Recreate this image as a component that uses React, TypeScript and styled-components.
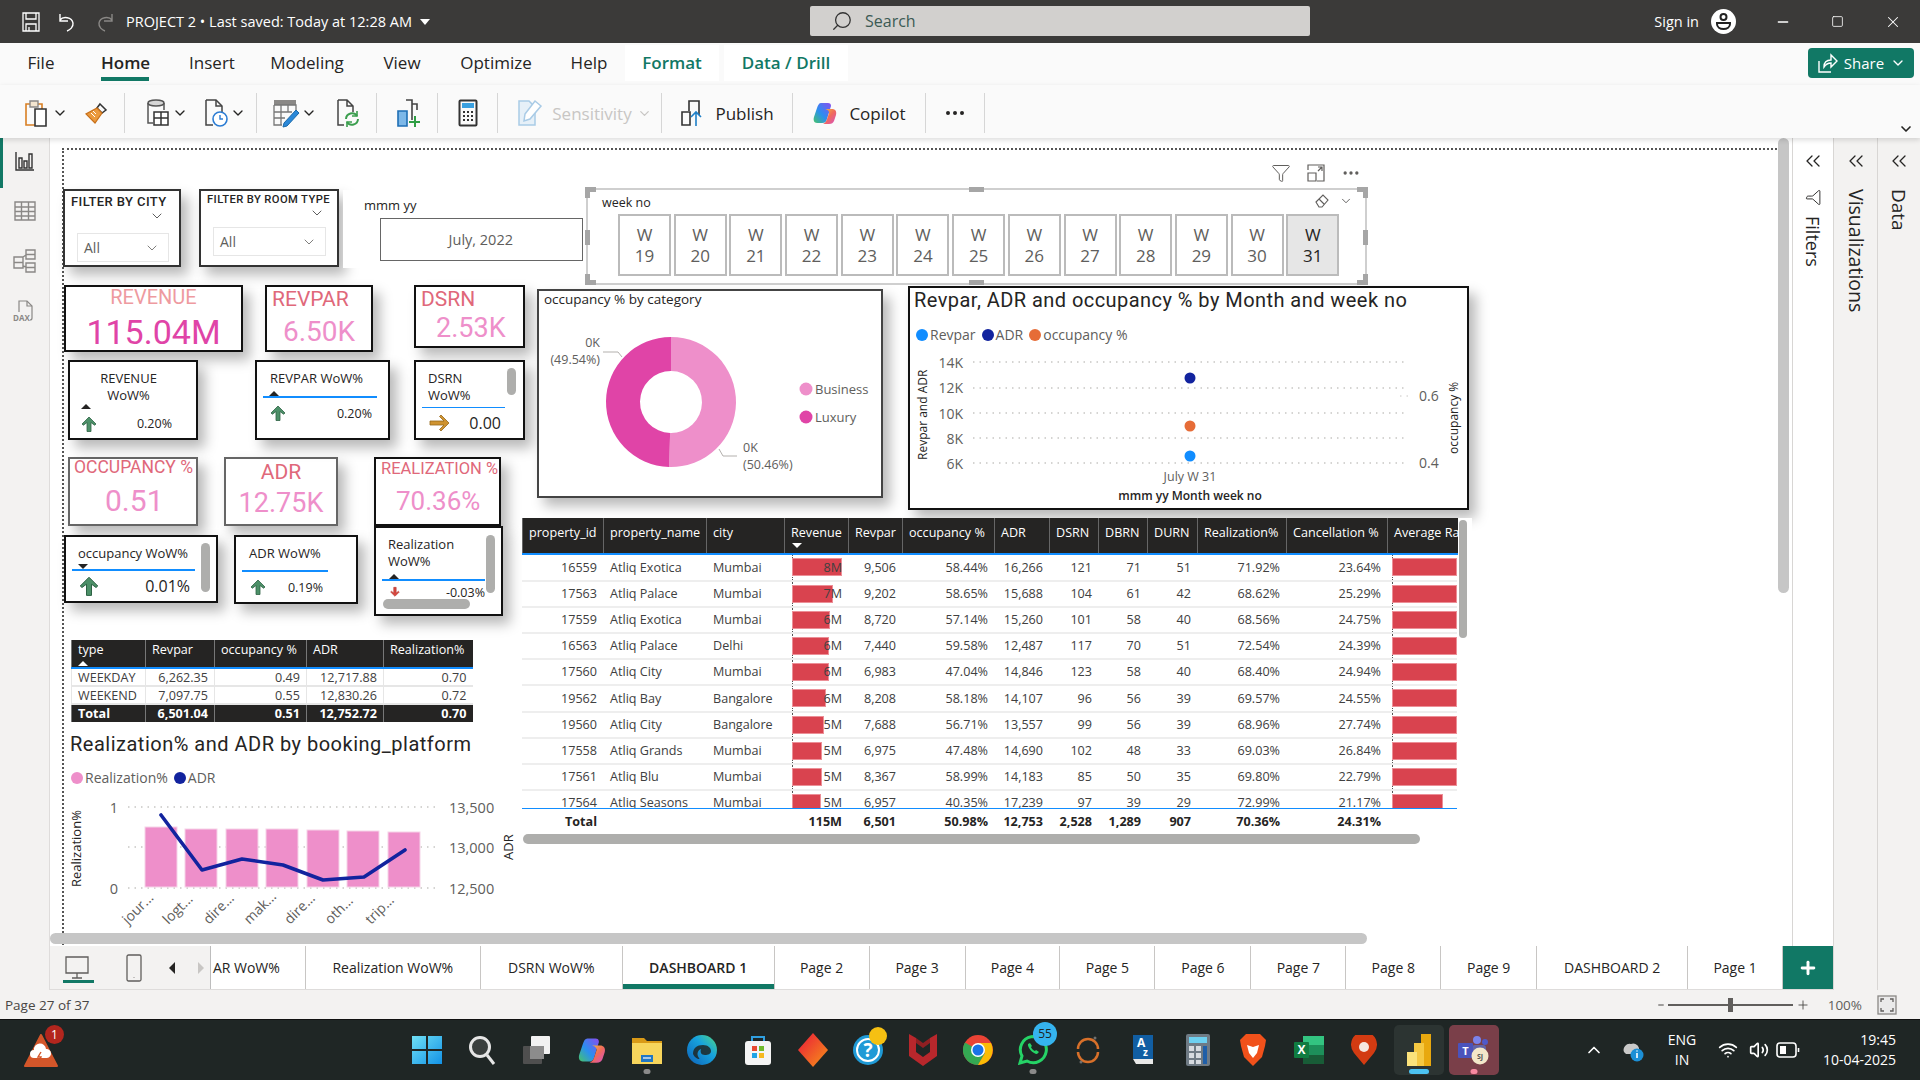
import React from 'react';
import styled, { createGlobalStyle } from 'styled-components';
import {
  ChevronDown,
  ChevronUp,
  ChevronsLeft,
  Funnel,
  Minus,
  Search,
  Square,
  Volume2,
  Wifi,
  X,
  Plus,
  MoreHorizontal,
} from 'lucide-react';

const UI = '"Open Sans", "Noto Sans", sans-serif';
const DIN = 'Roboto, "Liberation Sans", sans-serif';
const TEAL = '#117865';
const PINK = '#ee8fca';
const MAGENTA = '#e044a7';
const SALMON = '#e0687a';
const NAVY = '#12239e';

// report page origin in window pixels (inside of the dotted border)
const OX = 64;
const OY = 150;

const GlobalStyle = createGlobalStyle`
  html, body { margin: 0; padding: 0; background: #fff; }
  body { font-family: ${UI}; color: #252423; overflow: hidden; }
  * { box-sizing: border-box; }
`;

const Shell = styled.div`
  width: 1920px;
  height: 1080px;
  display: flex;
  flex-direction: column;
  overflow: hidden;
`;

/* title bar */
const TitleBar = styled.header`
  height: 43px;
  background: #3b3a39;
  color: #fff;
  display: flex;
  align-items: center;
  position: relative;
  padding-left: 20px;
`;
const TitleButton = styled.span<{ $w: number }>`
  width: ${(p) => p.$w}px;
  display: flex;
  align-items: center;
  justify-content: center;
`;
const DocName = styled.span`
  font-size: 14.5px;
  margin-left: 8px;
  white-space: nowrap;
`;
const Caret = styled.span`
  width: 0;
  height: 0;
  margin-left: 8px;
  border-left: 5px solid transparent;
  border-right: 5px solid transparent;
  border-top: 6px solid #fff;
`;
const SearchBox = styled.div`
  position: absolute;
  left: 810px;
  top: 6px;
  width: 500px;
  height: 30px;
  background: #d2d0ce;
  border-radius: 2px;
  display: flex;
  align-items: center;
  padding-left: 21px;
  gap: 12px;
  color: #3c5a54;
  font-size: 16px;
`;
const MirroredSearch = styled(Search)`
  transform: scaleX(-1);
`;
const TitleRight = styled.div`
  margin-left: auto;
  display: flex;
  align-items: center;
`;
const SignIn = styled.span`
  font-size: 14.5px;
  margin-right: 12px;
`;
const Avatar = styled.span`
  width: 25px;
  height: 25px;
  border-radius: 50%;
  background: #fff;
  margin-right: 19px;
  display: flex;
  align-items: center;
  justify-content: center;
`;
const WinButton = styled.span`
  width: 55px;
  display: flex;
  justify-content: center;
`;

/* menu + ribbon */
const MenuBar = styled.nav`
  height: 42px;
  background: #fafafa;
  display: flex;
  align-items: flex-start;
  padding: 2px 0 0 0;
  position: relative;
  font-size: 17px;
`;
const MenuItem = styled.span<{ $left: number; $w: number; $active?: boolean; $context?: boolean }>`
  margin-left: ${(p) => p.$left}px;
  width: ${(p) => p.$w}px;
  height: 36px;
  line-height: 35px;
  text-align: center;
  white-space: nowrap;
  color: ${(p) => (p.$context ? TEAL : '#252423')};
  font-weight: ${(p) => (p.$context ? 600 : p.$active ? 600 : 400)};
  background: ${(p) => (p.$context ? '#fff' : 'transparent')};
  border-bottom: ${(p) => (p.$active ? `4px solid ${TEAL}` : 'none')};
`;
const ShareButton = styled.button`
  position: absolute;
  left: 1808px;
  top: 5px;
  width: 106px;
  height: 30px;
  background: ${TEAL};
  color: #fff;
  border: 0;
  border-radius: 4px;
  display: flex;
  align-items: center;
  justify-content: center;
  gap: 6px;
  font: 400 15px ${UI};
`;
const Ribbon = styled.div`
  height: 53px;
  background: #fafafa;
  box-shadow: 0 2px 5px rgba(0, 0, 0, 0.14);
  display: flex;
  align-items: flex-start;
  padding: 8px 0 0 16px;
  position: relative;
  z-index: 5;
`;
const RibbonGroup = styled.div<{ $w: number; $muted?: boolean; $gap?: number; $shift?: number }>`
  width: ${(p) => p.$w}px;
  height: 40px;
  display: flex;
  align-items: center;
  justify-content: center;
  gap: ${(p) => p.$gap ?? 9}px;
  border-right: 1px solid #d6d6d6;
  padding-left: ${(p) => Math.max(p.$shift ?? 0, 0)}px;
  padding-right: ${(p) => Math.max(-(p.$shift ?? 0), 0)}px;
  font-size: 17px;
  color: ${(p) => (p.$muted ? '#c8c6c4' : '#252423')};
`;
const RibbonCaret = styled(ChevronDown)<{ $pull: number }>`
  margin-left: -${(p) => p.$pull}px;
`;
const RibbonFold = styled.span`
  position: absolute;
  right: 6px;
  bottom: 1px;
  display: flex;
`;

/* body */
const Body = styled.main`
  height: 852px;
  display: flex;
`;
const NavRail = styled.aside`
  width: 50px;
  background: #f3f2f1;
  border-right: 1px solid #dedcdb;
  display: flex;
  flex-direction: column;
  align-items: center;
  padding-top: 6px;
  gap: 16px;
  position: relative;
`;
const NavMarker = styled.span`
  position: absolute;
  left: 0;
  top: 0;
  width: 3px;
  height: 50px;
  background: ${TEAL};
`;
const NavIcon = styled.span`
  width: 34px;
  height: 34px;
  display: flex;
  align-items: center;
  justify-content: center;
`;
const Center = styled.div`
  width: 1783px;
  display: flex;
  flex-direction: column;
`;
const CanvasRow = styled.div`
  flex: 1;
  display: flex;
  position: relative;
  min-height: 0;
`;
const CanvasArea = styled.section`
  flex: 1;
  position: relative;
  background: #fff;
  padding: 10px 11px 0 12px;
  overflow: hidden;
`;
const ReportPage = styled.div`
  position: relative;
  height: 900px;
  border-top: 2px dotted #555;
  border-left: 2px dotted #555;
`;
const ScrollThumbV = styled.span`
  position: absolute;
  right: 3px;
  top: 0;
  width: 11px;
  height: 455px;
  background: #c6c6c6;
  border-radius: 6px;
`;
const ScrollThumbH = styled.span`
  position: absolute;
  left: 0;
  bottom: 2px;
  width: 1317px;
  height: 11px;
  background: #c6c6c6;
  border-radius: 6px;
`;
const SidePane = styled.aside<{ $w: number; $bg: string }>`
  width: ${(p) => p.$w}px;
  background: ${(p) => p.$bg};
  border-left: 1px solid #d8d6d4;
  display: flex;
  flex-direction: column;
  align-items: center;
  padding-top: 11px;
  gap: 16px;
  position: relative;
`;
const PaneLabel = styled.span<{ $size: number; $pull?: number }>`
  writing-mode: vertical-rl;
  font-size: ${(p) => p.$size}px;
  line-height: 20px;
  margin-top: ${(p) => p.$pull ?? 0}px;
  color: #252423;
`;
const PaneFunnel = styled(Funnel)`
  transform: rotate(90deg);
`;

/* free canvas visuals */
const Visual = styled.div<{ $x: number; $y: number; $w: number; $h: number; $z?: number; $shadow?: boolean }>`
  position: absolute;
  left: ${(p) => p.$x - OX}px;
  top: ${(p) => p.$y - OY}px;
  width: ${(p) => p.$w}px;
  height: ${(p) => p.$h}px;
  background: #fff;
  z-index: ${(p) => p.$z ?? 1};
  box-shadow: ${(p) => (p.$shadow === false ? 'none' : '7px 8px 12px rgba(0, 0, 0, 0.28)')};
`;
const Framed = styled(Visual)<{ $line?: string }>`
  border: 2px solid ${(p) => p.$line ?? '#111'};
  display: flex;
  flex-direction: column;
`;
const KpiTitle = styled.div<{ $size: number; $color: string; $top: number; $left?: number }>`
  font: 400 ${(p) => p.$size}px/1 ${DIN};
  color: ${(p) => p.$color};
  margin-top: ${(p) => p.$top}px;
  white-space: nowrap;
  text-align: ${(p) => (p.$left === undefined ? 'center' : 'left')};
  margin-left: ${(p) => p.$left ?? 0}px;
`;
const KpiValue = styled(KpiTitle)``;

const SlicerTitle = styled.div<{ $size: number; $left: number; $top: number }>`
  font: 500 ${(p) => p.$size}px/1 ${DIN};
  letter-spacing: 0.4px;
  color: #252423;
  margin: ${(p) => p.$top}px 0 0 ${(p) => p.$left}px;
  white-space: nowrap;
`;
const SlicerChevron = styled.span<{ $right: number }>`
  align-self: flex-end;
  display: flex;
  margin: 0 ${(p) => p.$right}px 0 0;
`;
const DropBox = styled.div<{ $left: number; $w: number; $top: number }>`
  width: ${(p) => p.$w}px;
  height: 29px;
  margin: ${(p) => p.$top}px 0 0 ${(p) => p.$left}px;
  border: 1px solid #e6e6e6;
  display: flex;
  align-items: center;
  justify-content: space-between;
  padding: 0 8px 0 6px;
  font-size: 14px;
  color: #605e5c;
`;
const DateLabel = styled.div`
  font-size: 13px;
  color: #252423;
  margin: 6px 0 0 21px;
`;
const DateBox = styled.div`
  width: 203px;
  height: 43px;
  border: 1px solid #666;
  margin: 4px 0 0 37px;
  display: flex;
  align-items: center;
  justify-content: flex-end;
  padding-right: 69px;
  font-size: 14.5px;
  color: #605e5c;
`;

const WeekFrame = styled(Visual)`
  border: 2px solid #cfcfcf;
  padding: 3px 0 0 30px;
`;
const WeekTitle = styled.div`
  font-size: 12.5px;
  margin-left: -16px;
  height: 21px;
  line-height: 19px;
`;
const WeekRow = styled.div`
  display: flex;
  gap: 2.7px;
`;
const WeekButton = styled.div<{ $on?: boolean }>`
  width: 53px;
  height: 62px;
  border: 2px solid #bbb;
  background: ${(p) => (p.$on ? '#e6e6e6' : '#fff')};
  color: ${(p) => (p.$on ? '#252423' : '#605e5c')};
  font-size: 17px;
  line-height: 21px;
  display: flex;
  flex-direction: column;
  align-items: center;
  justify-content: center;
`;
const Handle = styled.span<{ $l: number; $t: number; $w: number; $h: number }>`
  position: absolute;
  left: ${(p) => p.$l}px;
  top: ${(p) => p.$t}px;
  width: ${(p) => p.$w}px;
  height: ${(p) => p.$h}px;
  background: #a6a6a6;
`;
const HeaderTools = styled.div`
  position: absolute;
  left: ${1271 - OX}px;
  top: ${163 - OY}px;
  width: 90px;
  display: flex;
  align-items: center;
  justify-content: space-between;
  color: #605e5c;
`;
const WeekTools = styled.div`
  position: absolute;
  right: 12px;
  top: 4px;
  display: flex;
  align-items: center;
  gap: 10px;
`;

const WowTitle = styled.div<{ $left: number; $center?: boolean }>`
  font-size: 13px;
  line-height: 17px;
  margin: 7.5px 0 0 ${(p) => p.$left}px;
  padding-right: ${(p) => (p.$center ? 9 : 0)}px;
  white-space: nowrap;
  text-align: ${(p) => (p.$center ? 'center' : 'left')};
  color: #252423;
`;
const SortSlot = styled.div<{ $left: number }>`
  height: 9.5px;
  padding-left: ${(p) => p.$left}px;
  display: flex;
  align-items: flex-end;
`;
const SortMark = styled.span<{ $down?: boolean; $light?: boolean }>`
  display: block;
  width: 0;
  height: 0;
  border-left: 5px solid transparent;
  border-right: 5px solid transparent;
  ${(p) => (p.$down ? 'border-top' : 'border-bottom')}: 5px solid ${(p) => (p.$light ? '#fff' : '#252423')};
`;
const HeadSort = styled.span<{ $left: number; $bottom: number }>`
  position: absolute;
  left: ${(p) => p.$left}px;
  bottom: ${(p) => p.$bottom}px;
`;
const WowRule = styled.div<{ $left: number; $w: number }>`
  width: ${(p) => p.$w}px;
  height: 2px;
  margin-left: ${(p) => p.$left}px;
  background: #118dff;
`;
const WowRow = styled.div<{ $left: number; $right: number; $size: number; $h?: number }>`
  height: ${(p) => p.$h ?? 30}px;
  flex-shrink: 0;
  margin-left: ${(p) => p.$left}px;
  width: ${(p) => p.$right - p.$left}px;
  display: flex;
  align-items: center;
  font-size: ${(p) => p.$size}px;
  color: #252423;
  white-space: nowrap;
  overflow: hidden;
`;
const WowValue = styled.span<{ $left?: number }>`
  margin-left: ${(p) => (p.$left === undefined ? 'auto' : `${p.$left}px`)};
  flex-shrink: 0;
`;
const InnerThumb = styled.span<{ $l: number; $t: number; $w: number; $h: number }>`
  position: absolute;
  left: ${(p) => p.$l}px;
  top: ${(p) => p.$t}px;
  width: ${(p) => p.$w}px;
  height: ${(p) => p.$h}px;
  background: #aeaeac;
  border-radius: 5px;
`;

/* tables */
const Col = styled.col<{ $w: number }>`
  width: ${(p) => p.$w}px;
`;
const SmallTable = styled.table`
  width: 401px;
  table-layout: fixed;
  border-collapse: collapse;
  font-size: 12.6px;
  th {
    height: 28px;
    position: relative;
    background: #252423;
    color: #fff;
    font-weight: 400;
    text-align: left;
    vertical-align: top;
    padding: 2px 6px 0;
    border-left: 1px solid #777;
    border-bottom: 2px solid #118dff;
    line-height: 16px;
  }
  td {
    height: 18px;
    padding: 0 6px;
    text-align: right;
    color: #404040;
    border-left: 1px solid #e6e6e6;
    border-bottom: 2px solid #e6e6e6;
    line-height: 15px;
  }
  td:first-child { text-align: left; }
  tr.total td {
    background: #252423;
    color: #fff;
    font-weight: 700;
    border-left: 1px solid #777;
    border-top: 2px solid #118dff;
    border-bottom: 0;
  }
`;
const BigTable = styled.table`
  width: 935px;
  table-layout: fixed;
  border-collapse: collapse;
  font-size: 12.6px;
  th {
    height: 36px;
    position: relative;
    background: #252423;
    color: #fff;
    font-weight: 400;
    text-align: left;
    vertical-align: top;
    padding: 7px 6px 0;
    border-left: 1px solid #666;
    border-bottom: 2px solid #118dff;
    line-height: 16px;
    white-space: nowrap;
    overflow: hidden;
  }
  td {
    height: 26.1px;
    padding: 0 6px;
    text-align: right;
    color: #404040;
    border-bottom: 2px solid #eee;
    line-height: 16px;
    white-space: nowrap;
  }
  td.text { text-align: left; padding-left: 7px; }
`;
const RowClip = styled.div`
  width: 935px;
  height: 254px;
  overflow: hidden;
  border-bottom: 1.5px solid #118dff;
`;
const TotalRow = styled(BigTable)`
  td {
    height: 26px;
    border: 0;
    font-weight: 700;
    color: #252423;
  }
`;
const BarCell = styled.td<{ $inset: number }>`
  position: relative;
  &::before {
    content: '';
    position: absolute;
    left: ${(p) => p.$inset}px;
    top: 0;
    bottom: 0;
    border-left: 1px dotted #555;
  }
`;
const DataBar = styled.span<{ $left: number }>`
  position: absolute;
  left: ${(p) => p.$left}px;
  top: 3px;
  height: 18px;
  background: #d9434f;
  border: 1px solid #ec8f97;
  z-index: 0;
`;
const BarLabel = styled.span`
  position: relative;
  z-index: 1;
`;

/* charts */
const VisualTitle = styled.div<{ $size: number; $font?: string; $left: number; $top: number; $spacing?: number; $weight?: number }>`
  font: ${(p) => p.$weight ?? 400} ${(p) => p.$size}px/1.2 ${(p) => p.$font ?? UI};
  letter-spacing: ${(p) => p.$spacing ?? 0}px;
  margin: ${(p) => p.$top}px 0 0 ${(p) => p.$left}px;
  color: #252423;
  white-space: nowrap;
`;
const Legend = styled.div<{ $left: number; $top: number; $gap: number }>`
  display: flex;
  align-items: center;
  gap: ${(p) => p.$gap}px;
  margin: ${(p) => p.$top}px 0 0 ${(p) => p.$left}px;
  font-size: 14px;
  color: #605e5c;
`;
const LegendEntry = styled.span`
  display: flex;
  align-items: center;
  gap: 2px;
`;
const Dot = styled.span<{ $c: string }>`
  width: 12px;
  height: 12px;
  border-radius: 50%;
  background: ${(p) => p.$c};
`;
const ChartCanvas = styled.svg`
  position: absolute;
  left: 0;
  top: 0;
  overflow: visible;
  pointer-events: none;
`;
const ChartText = styled.text<{ $size?: number; $fill?: string; $weight?: number }>`
  font-family: ${UI};
  font-size: ${(p) => p.$size ?? 14}px;
  font-weight: ${(p) => p.$weight ?? 400};
  fill: ${(p) => p.$fill ?? '#605e5c'};
`;

/* page tabs */
const TabStrip = styled.div`
  height: 44px;
  display: flex;
  background: #fff;
  position: relative;
  z-index: 3;
  border-bottom: 1px solid #dedcdb;
`;
const ViewTools = styled.div`
  width: 161px;
  background: #f3f2f1;
  display: flex;
  align-items: center;
  padding-left: 15px;
  position: relative;
  border-right: 1px solid #bdbdbd;
`;
const ViewMarker = styled.span`
  position: absolute;
  left: 13px;
  bottom: 6px;
  width: 31px;
  height: 3px;
  background: ${TEAL};
`;
const ViewButton = styled.span<{ $w: number }>`
  width: ${(p) => p.$w}px;
  display: flex;
  align-items: center;
`;
const Tab = styled.div<{ $w: number; $active?: boolean; $cut?: boolean }>`
  width: ${(p) => p.$w}px;
  height: 100%;
  border-right: 1px solid #c8c6c4;
  font-size: 14px;
  font-weight: ${(p) => (p.$active ? 600 : 400)};
  color: #252423;
  display: flex;
  align-items: center;
  justify-content: ${(p) => (p.$cut ? 'flex-end' : 'center')};
  padding-right: ${(p) => (p.$cut ? 25 : 0)}px;
  box-shadow: ${(p) => (p.$active ? `inset 0 -5px 0 ${TEAL}` : 'none')};
  white-space: nowrap;
  overflow: hidden;
`;
const AddTab = styled.div`
  width: 50px;
  height: 100%;
  background: ${TEAL};
  color: #fff;
  display: flex;
  align-items: center;
  justify-content: center;
`;

/* status + task bar */
const StatusBar = styled.footer`
  height: 29px;
  background: #f3f2f1;
  display: flex;
  align-items: center;
  padding-left: 5px;
  font-size: 13.5px;
  color: #484644;
`;
const ZoomControl = styled.div`
  margin-left: auto;
  display: flex;
  align-items: center;
  gap: 3px;
  padding-right: 23px;
`;
const ZoomTrack = styled.span`
  width: 125px;
  height: 2px;
  background: #605e5c;
  position: relative;
`;
const ZoomThumb = styled.span`
  position: absolute;
  left: 60px;
  top: -6px;
  width: 5px;
  height: 14px;
  background: #605e5c;
`;
const ZoomText = styled.span`
  margin: 0 12px 0 15px;
  color: #605e5c;
`;
const Taskbar = styled.div`
  height: 61px;
  background: #1f2625;
  border-top: 1px solid #111;
  display: flex;
  align-items: center;
  color: #fff;
`;
const TaskStart = styled.div`
  width: 402px;
  padding-left: 16px;
  display: flex;
`;
const TaskIcons = styled.div`
  display: flex;
  align-items: center;
`;
const TaskTile = styled.div<{ $bg?: string }>`
  width: 50px;
  height: 50px;
  margin-right: 5.1px;
  position: relative;
  display: flex;
  align-items: center;
  justify-content: center;
  border-radius: 5px;
  background: ${(p) => p.$bg ?? 'transparent'};
`;
const TileDot = styled.span<{ $c: string; $w: number }>`
  position: absolute;
  left: 50%;
  bottom: 1px;
  width: ${(p) => p.$w}px;
  height: 5px;
  border-radius: 3px;
  transform: translateX(-50%);
  background: ${(p) => p.$c};
`;
const TileBadge = styled.span<{ $c: string; $color?: string; $r: number; $t: number; $size: number }>`
  position: absolute;
  right: ${(p) => p.$r}px;
  top: ${(p) => p.$t}px;
  width: ${(p) => p.$size}px;
  height: ${(p) => p.$size}px;
  border-radius: 50%;
  background: ${(p) => p.$c};
  color: ${(p) => p.$color ?? '#fff'};
  font-size: 12px;
  line-height: ${(p) => p.$size}px;
  text-align: center;
`;
const Tray = styled.div`
  margin-left: auto;
  display: flex;
  align-items: center;
  padding-right: 24px;
`;
const TrayIcon = styled.span<{ $w: number }>`
  width: ${(p) => p.$w}px;
  display: flex;
  justify-content: center;
`;
const TrayText = styled.div<{ $right?: boolean; $w: number }>`
  width: ${(p) => p.$w}px;
  font-size: 14px;
  line-height: 20px;
  text-align: ${(p) => (p.$right ? 'right' : 'center')};
  white-space: nowrap;
`;

/* ----- icons ----- */
type IconProps = { size?: number };

const SaveIcon = () => (
  <svg width="20" height="22" viewBox="0 0 20 22" fill="none" stroke="#fff" strokeWidth="1.3">
    <path d="M2 2h16v18H2zM5 2v6h10V2M5 20v-7h10v7M8 20v-4" />
  </svg>
);
const UndoIcon = () => (
  <svg width="20" height="22" viewBox="0 0 20 22" fill="none" stroke="#fff" strokeWidth="1.4">
    <path d="M3 3v7h8M3 9c3-4 12-3 13 3 .5 4-3 7-6 8" />
  </svg>
);
const RedoIcon = () => (
  <svg width="20" height="22" viewBox="0 0 20 22" fill="none" stroke="#8a8886" strokeWidth="1.4">
    <path d="M17 3v7H9M17 9c-3-4-12-3-13 3-.5 4 3 7 6 8" />
  </svg>
);
const PersonIcon = () => (
  <svg width="19" height="21" viewBox="0 0 19 21" fill="none" stroke="#222" strokeWidth="2">
    <circle cx="9.5" cy="6" r="3" />
    <path d="M3 12h13v1c0 3-3 5-6.5 5S3 16 3 13z" />
  </svg>
);
const ShareIcon = () => (
  <svg width="22" height="22" viewBox="0 0 22 22" fill="none" stroke="#fff" strokeWidth="1.4">
    <path d="M3 9v11h12M3 20l0 0" />
    <path d="M8 15c0-5 3-7 7-7V3l6 6-6 6v-4c-3 0-5 1-7 4z" />
  </svg>
);
const ClipboardIcon = () => (
  <svg width="26" height="30" viewBox="0 0 26 30" fill="none">
    <path d="M2 6h16v21H2z" stroke="#d97f23" strokeWidth="1.6" />
    <path d="M6 3h8v6H6z" stroke="#8a8886" strokeWidth="1.4" fill="#f3e5d0" />
    <path d="M11 11h11v17H11z" stroke="#333" strokeWidth="1.6" fill="#fff" />
  </svg>
);
const PainterIcon = () => (
  <svg width="26" height="26" viewBox="0 0 26 26">
    <path d="M16 4l6 6-4 3-5-5z" fill="none" stroke="#333" strokeWidth="1.5" />
    <path d="M13 8l5 5-7 10L2 14z" fill="#eb9a3e" stroke="#c8701a" strokeWidth="1.2" />
    <path d="M7 13l4 4M9 11l3 3" stroke="#fff" strokeWidth="1" />
  </svg>
);
const GetDataIcon = () => (
  <svg width="26" height="30" viewBox="0 0 26 30" fill="none" stroke="#555" strokeWidth="1.5">
    <ellipse cx="11" cy="5" rx="8" ry="3" fill="#d6d6d6" />
    <path d="M3 5v20h5M19 5v7" />
    <path d="M9 14h14v13H9zM9 20h14M16 14v13" stroke="#333" fill="#fff" />
  </svg>
);
const RecentIcon = () => (
  <svg width="26" height="30" viewBox="0 0 26 30" fill="none">
    <path d="M3 2h10l6 6v11M3 2v25h7" stroke="#444" strokeWidth="1.5" />
    <path d="M13 2v6h6" stroke="#444" strokeWidth="1.5" />
    <circle cx="17" cy="21" r="7" stroke="#2b7cd3" strokeWidth="1.6" fill="#fff" />
    <path d="M17 17v4h3" stroke="#2b7cd3" strokeWidth="1.4" />
  </svg>
);
const TransformIcon = () => (
  <svg width="28" height="30" viewBox="0 0 28 30" fill="none">
    <path d="M2 2h22v5H2z" fill="#8a8886" />
    <path d="M2 7h22v7M2 7v20h8M2 14h18M2 20h11M9 7v20M16 7v7" stroke="#777" strokeWidth="1.3" />
    <path d="M12 25l12-13 3 3-12 13-4 1z" fill="#2b88d8" stroke="#1a6aa9" strokeWidth="1" />
  </svg>
);
const RefreshIcon = () => (
  <svg width="26" height="30" viewBox="0 0 26 30" fill="none">
    <path d="M3 2h9l6 6v6M3 2v25h6M12 2v6h6" stroke="#444" strokeWidth="1.5" />
    <path d="M11 21a6 6 0 0 1 11-3M23 21a6 6 0 0 1-11 3" stroke="#3b9e4e" strokeWidth="2" />
    <path d="M22 13v5h-5M12 29v-5h5" stroke="#3b9e4e" strokeWidth="1.6" />
  </svg>
);
const NewVisualIcon = () => (
  <svg width="26" height="30" viewBox="0 0 26 30" fill="none">
    <path d="M2 13h9v15H2z" fill="#7db8e8" stroke="#1f6fb5" strokeWidth="1.6" />
    <path d="M10 2h6v20M16 6h5v6" stroke="#444" strokeWidth="1.6" />
    <path d="M19 18v11M13 24h11" stroke="#2f9e44" strokeWidth="2" />
  </svg>
);
const CalcIcon = () => (
  <svg width="20" height="28" viewBox="0 0 20 28" fill="none">
    <rect x="1.5" y="1.5" width="17" height="25" rx="1" stroke="#333" strokeWidth="2" />
    <rect x="4" y="4" width="12" height="5" fill="#3aa0e0" />
    <path d="M5 13h2M9 13h2M13 13h2M5 17h2M9 17h2M13 17h2M5 21h2M9 21h2M13 21h2" stroke="#333" strokeWidth="2" />
  </svg>
);
const SensitivityIcon = () => (
  <svg width="26" height="30" viewBox="0 0 26 30" fill="none" stroke="#a9cbe6" strokeWidth="1.5">
    <path d="M2 3h10l6 6v18H2z" fill="#e6f0f8" />
    <path d="M8 16L18 3l6 5-11 13-6 2z" fill="#fff" />
  </svg>
);
const PublishIcon = () => (
  <svg width="24" height="30" viewBox="0 0 24 30" fill="none" stroke="#333" strokeWidth="1.6">
    <path d="M9 13V3h10v14" />
    <path d="M2 14h8v13H2z" />
    <path d="M16 28V14M11 19l5-5 5 5" stroke="#1f7fc7" />
  </svg>
);
const CopilotIcon = ({ size = 26 }: IconProps) => (
  <svg width={size} height={size} viewBox="0 0 26 26">
    <defs>
      <linearGradient id="cpA" x1="0" y1="1" x2="1" y2="0">
        <stop offset="0" stopColor="#46c46a" />
        <stop offset="0.45" stopColor="#2a8ff0" />
        <stop offset="1" stopColor="#8a4df0" />
      </linearGradient>
      <linearGradient id="cpB" x1="0" y1="0" x2="1" y2="1">
        <stop offset="0" stopColor="#f2c33a" />
        <stop offset="0.5" stopColor="#f06a5a" />
        <stop offset="1" stopColor="#d64fc8" />
      </linearGradient>
    </defs>
    <path d="M9 3h7c2 0 3 1 3 3l-4 13c-1 3-2 4-5 4H5c-3 0-4-3-3-6l3-9c1-3 2-5 4-5z" fill="url(#cpA)" />
    <path d="M12 9h8c3 0 5 2 4 6l-2 6c-1 2-2 3-5 3h-6c2-1 3-2 4-5l2-6c.5-2-2-4-5-4z" fill="url(#cpB)" />
  </svg>
);
const ReportNavIcon = () => (
  <svg width="20" height="20" viewBox="0 0 20 20" fill="none" stroke="#333" strokeWidth="1.4">
    <path d="M1 1v18h18" />
    <path d="M4 7h3v10H4zM9 10h3v7H9zM14 3h3v14h-3z" />
  </svg>
);
const TableNavIcon = () => (
  <svg width="22" height="20" viewBox="0 0 22 20" fill="none" stroke="#8a8886" strokeWidth="1.4">
    <path d="M1 1h20v18H1zM1 6h20M1 10.500h20M1 15h20M7.500 1v18M14.500 1v18" />
  </svg>
);
const ModelNavIcon = () => (
  <svg width="23" height="24" viewBox="0 0 23 24" fill="none" stroke="#8a8886" strokeWidth="1.4">
    <path d="M1 8h9v11H1zM1 13.500h9M13 1h9v9h-9zM13 5.500h9M13 14h9v9h-9zM13 18.500h9M10 8l3-2M10 17l3 1" />
  </svg>
);
const DaxNavIcon = () => (
  <svg width="24" height="24" viewBox="0 0 24 24" fill="none" stroke="#8a8886" strokeWidth="1.2">
    <path d="M6 13V2h8l5 5v12c0 1-1 2-2 2" />
    <path d="M14 2v5h5" />
    <text x="0" y="22" fontSize="8" fontWeight="700" fill="#8a8886" stroke="none" fontFamily="Open Sans">DAX</text>
  </svg>
);
const ArrowUpIcon = ({ size = 16 }: IconProps) => (
  <svg width={size} height={size} viewBox="0 0 16 16">
    <path d="M8 1L1 8l1.400 1.200L6 6.500V15.500h4V6.500l3.600 2.700L15 8z" fill="#4c9068" stroke="#2d6244" strokeWidth="0.8" />
  </svg>
);
const ArrowRightIcon = () => (
  <svg width="21" height="18" viewBox="0 0 21 18">
    <path d="M12 1l8 8-8 8-1.500-1.500L15 11H1V7h14l-4.500-4.500z" fill="#cf9330" stroke="#96671b" strokeWidth="0.8" />
  </svg>
);
const ArrowDownIcon = () => (
  <svg width="16" height="16" viewBox="0 0 16 16">
    <path d="M8 15l7-7-1.400-1.200L10 9.500V.5H6v9L2.400 6.800 1 8z" fill="#d8473f" stroke="#a82c26" strokeWidth="0.8" />
  </svg>
);
const EraserIcon = () => (
  <svg width="14" height="14" viewBox="0 0 14 14" fill="none" stroke="#605e5c" strokeWidth="1.1">
    <path d="M1 8l7-7 5 5-6 7H4zM4 5l5 5" />
  </svg>
);
const FocusIcon = () => (
  <svg width="18" height="18" viewBox="0 0 18 18" fill="none" stroke="#605e5c" strokeWidth="1.2">
    <path d="M1 6V1h16v16H10" />
    <path d="M1 9h8v8H1zM11 7l4-4M11 3h4v4" />
  </svg>
);
const MonitorIcon = () => (
  <svg width="24" height="26" viewBox="0 0 24 26" fill="none" stroke="#605e5c" strokeWidth="1.3">
    <path d="M1 2h22v16H1zM12 18v5M7 23h10" />
  </svg>
);
const PhoneIcon = () => (
  <svg width="16" height="28" viewBox="0 0 16 28" fill="none" stroke="#605e5c" strokeWidth="1.3">
    <rect x="1" y="1" width="14" height="26" rx="1.500" />
    <path d="M8 23v.5" />
  </svg>
);
const PagerArrow = ({ left, muted }: { left?: boolean; muted?: boolean }) => (
  <svg width="7" height="12" viewBox="0 0 7 12">
    <path d={left ? 'M6 0v12L0 6z' : 'M1 0v12l6-6z'} fill={muted ? '#c8c6c4' : '#252423'} />
  </svg>
);
const FitIcon = () => (
  <svg width="20" height="20" viewBox="0 0 20 20" fill="none" stroke="#605e5c" strokeWidth="1.300">
    <rect x="1" y="1" width="18" height="18" fill="#eaeaea" stroke="#8a8886" />
    <path d="M4 7V4h3M13 4h3v3M16 13v3h-3M7 16H4v-3" />
  </svg>
);

/* taskbar artwork */
const WindowsLogo = () => (
  <svg width="30" height="30" viewBox="0 0 30 30">
    <defs>
      <linearGradient id="winG" x1="0" y1="0" x2="1" y2="1">
        <stop offset="0" stopColor="#6fe0f5" />
        <stop offset="1" stopColor="#1392e6" />
      </linearGradient>
    </defs>
    <path d="M0 1h14v13H0zM16 1h14v13H16zM0 16h14v13H0zM16 16h14v13H16z" fill="url(#winG)" />
  </svg>
);
const TaskSearch = () => (
  <svg width="28" height="30" viewBox="0 0 28 30" fill="none" stroke="#e6e6e6" strokeWidth="3">
    <circle cx="12" cy="12" r="9.500" fill="#3a3f3e" />
    <path d="M19 20l7 9" />
  </svg>
);
const TaskView = () => (
  <svg width="30" height="30" viewBox="0 0 30 30">
    <rect x="1" y="11" width="19" height="18" rx="1" fill="#4f4f4f" />
    <rect x="9" y="1" width="19" height="18" rx="1" fill="#f2f2f2" />
    <rect x="8" y="11" width="14" height="13" fill="#8c8c8c" />
  </svg>
);
const FolderIcon = () => (
  <svg width="30" height="28" viewBox="0 0 30 28">
    <path d="M0 2h12l3 3h15v4H0z" fill="#d99a17" />
    <path d="M0 7h30v21H0z" fill="#f7d55c" />
    <path d="M9 19h12v7H9z" fill="#2077c4" />
    <path d="M11 22h8" stroke="#fff" strokeWidth="1.2" />
  </svg>
);
const EdgeIcon = () => (
  <svg width="30" height="30" viewBox="0 0 30 30">
    <defs>
      <linearGradient id="edgeG" x1="0" y1="1" x2="1" y2="0">
        <stop offset="0" stopColor="#0d60b8" />
        <stop offset="0.6" stopColor="#17a3dd" />
        <stop offset="1" stopColor="#52d77f" />
      </linearGradient>
    </defs>
    <circle cx="15" cy="15" r="15" fill="url(#edgeG)" />
    <path d="M16 10c5 0 8 3 8 6 0 3-3 4-6 4-4 0-5-3-4-6-3 1-5 5-2 9 2 2-4 1-6-4 0-6 4-9 10-9z" fill="#1f2625" opacity="0.85" />
  </svg>
);
const StoreIcon = () => (
  <svg width="28" height="30" viewBox="0 0 28 30">
    <path d="M8 7V2h12v5" fill="none" stroke="#2f9fe0" strokeWidth="2" />
    <rect x="1" y="6" width="26" height="24" rx="3" fill="#f4f4f4" />
    <path d="M8 11h5v5H8z" fill="#e8492f" />
    <path d="M15 11h5v5h-5z" fill="#6fba2c" />
    <path d="M8 18h5v5H8z" fill="#1ea3e6" />
    <path d="M15 18h5v5h-5z" fill="#f6b91f" />
  </svg>
);
const DiamondIcon = () => (
  <svg width="30" height="34" viewBox="0 0 30 34">
    <defs>
      <linearGradient id="dmG" x1="0" y1="0" x2="1" y2="1">
        <stop offset="0" stopColor="#e9173a" />
        <stop offset="1" stopColor="#f79518" />
      </linearGradient>
    </defs>
    <path d="M15 0l15 17-15 17L0 17z" fill="url(#dmG)" />
  </svg>
);
const HelpIcon = () => (
  <svg width="30" height="32" viewBox="0 0 30 32">
    <circle cx="15" cy="16" r="15" fill="#1f9ad6" />
    <circle cx="15" cy="16" r="11" fill="none" stroke="#fff" strokeWidth="2" />
    <text x="15" y="23" textAnchor="middle" fontSize="19" fontWeight="700" fill="#fff" fontFamily="Open Sans">?</text>
  </svg>
);
const McAfeeIcon = () => (
  <svg width="28" height="32" viewBox="0 0 28 32">
    <path d="M0 0l7 4v14l7 5 7-5V4l7-4v22l-14 10L0 22z" fill="#b8272c" />
    <path d="M7 4l7 5 7-5v5l-7 5-7-5z" fill="#8f1f22" />
  </svg>
);
const ChromeIcon = () => (
  <svg width="30" height="30" viewBox="0 0 30 30">
    <circle cx="15" cy="15" r="15" fill="#ea4335" />
    <path d="M15 15L2 22.500A15 15 0 0 0 15 30z" fill="#34a853" />
    <path d="M15 15L2 7.500A15 15 0 0 0 2 22.500L15 30l7-12z" fill="#34a853" />
    <path d="M15 8h13a15 15 0 0 1-13 22l7-12z" fill="#fbbc05" />
    <circle cx="15" cy="15" r="7" fill="#fff" />
    <circle cx="15" cy="15" r="5.500" fill="#1a73e8" />
  </svg>
);
const WhatsAppIcon = () => (
  <svg width="30" height="30" viewBox="0 0 30 30" fill="none">
    <path d="M2 28l2-7a13 13 0 1 1 5 5z" stroke="#25d366" strokeWidth="3" />
    <path d="M10 9c-1 3 5 10 9 10l2-2-3-2-1 1c-1 0-4-3-4-4l1-1-2-3z" fill="#25d366" />
  </svg>
);
const RingIcon = () => (
  <svg width="26" height="30" viewBox="0 0 26 30" fill="none">
    <path d="M3 14a10 10 0 0 1 20 0" stroke="#d8702a" strokeWidth="2.500" />
    <path d="M3 17a10 10 0 0 0 20 0" stroke="#d8702a" strokeWidth="2.500" />
    <circle cx="20" cy="3" r="1.500" fill="#6f6f6f" />
    <circle cx="6" cy="27" r="1.500" fill="#6f6f6f" />
  </svg>
);
const DictIcon = () => (
  <svg width="24" height="30" viewBox="0 0 24 30">
    <path d="M2 0h20v24H2z" fill="#115ea3" />
    <path d="M2 24h20v5H5z" fill="#e8e8e8" />
    <text x="6" y="12" fontSize="12" fontWeight="700" fill="#fff" fontFamily="Open Sans">A</text>
    <text x="12" y="21" fontSize="10" fontWeight="700" fill="#fff" fontFamily="Open Sans">z</text>
  </svg>
);
const TaskCalc = () => (
  <svg width="24" height="32" viewBox="0 0 24 32">
    <rect width="24" height="32" rx="2" fill="#6f7b85" />
    <rect x="3" y="3" width="18" height="6" fill="#6dd0f0" />
    <path d="M3 12h5v5H3zM10 12h5v5h-5zM3 19h5v5H3zM10 19h5v5h-5zM3 26h5v4H3zM10 26h5v4h-5z" fill="#d6dbe0" />
    <path d="M17 12h4v18h-4z" fill="#1f5fa8" />
  </svg>
);
const BraveIcon = () => (
  <svg width="26" height="32" viewBox="0 0 26 32">
    <path d="M6 0h14l3 3 3 3-1 6-3 11-9 9-9-9L1 12 0 6l3-3z" fill="#f1511b" />
    <path d="M7 11l6 2 6-2-2 8-4 5-4-5z" fill="#fff" />
  </svg>
);
const ExcelIcon = () => (
  <svg width="30" height="28" viewBox="0 0 30 28">
    <path d="M9 0h21v9H9z" fill="#33c481" />
    <path d="M9 9h21v10H9z" fill="#1d8f5a" />
    <path d="M9 19h21v9H9z" fill="#185c37" />
    <rect y="6" width="15" height="16" rx="1" fill="#107c41" />
    <text x="7.500" y="18" textAnchor="middle" fontSize="12" fontWeight="700" fill="#fff" fontFamily="Open Sans">X</text>
  </svg>
);
const PinIcon = () => (
  <svg width="26" height="30" viewBox="0 0 26 30">
    <path d="M13 30L3 18A13 13 0 1 1 23 18z" fill="#d33b12" />
    <circle cx="13" cy="12" r="5" fill="#f6e7df" />
  </svg>
);
const PowerBiIcon = () => (
  <svg width="24" height="32" viewBox="0 0 24 32">
    <path d="M14 0h10v32H14z" fill="#e8a80f" />
    <path d="M7 9h10v23H7z" fill="#f5c842" />
    <path d="M0 18h10v14H0z" fill="#fbe27b" />
  </svg>
);
const TeamsIcon = () => (
  <svg width="32" height="30" viewBox="0 0 32 30">
    <circle cx="19" cy="5" r="4" fill="#7b83eb" />
    <circle cx="27" cy="7" r="3" fill="#5059c9" />
    <rect x="14" y="10" width="14" height="14" rx="3" fill="#6264a7" />
    <rect y="8" width="15" height="15" rx="1" fill="#4b53bc" />
    <text x="7.500" y="20" textAnchor="middle" fontSize="11" fontWeight="700" fill="#fff" fontFamily="Open Sans">T</text>
    <circle cx="22" cy="21" r="8.500" fill="#f3e7c9" />
    <text x="22" y="24" textAnchor="middle" fontSize="7" fontWeight="700" fill="#555" fontFamily="Open Sans">SJ</text>
  </svg>
);
const AlertIcon = () => (
  <svg width="34" height="36" viewBox="0 0 34 36">
    <path d="M17 3L1 34h32z" fill="#d3562a" stroke="#d3562a" strokeWidth="2" strokeLinejoin="round" />
    <path d="M10 26a4 4 0 0 1 0-8 6 6 0 0 1 12-1 4.500 4.500 0 0 1 1 9z" fill="#fff" />
    <path d="M17 20l-3 5h3l-2 5" stroke="#d3562a" strokeWidth="1.400" fill="none" />
  </svg>
);
const OneDriveTray = () => (
  <svg width="22" height="24" viewBox="0 0 22 24">
    <path d="M2 14a6 6 0 0 1 7-8 6 6 0 0 1 8 4v6H4z" fill="#c9c9c9" />
    <circle cx="15" cy="17" r="6.500" fill="#1c8fd6" />
    <path d="M15 15v5M15 12.500v1" stroke="#fff" strokeWidth="1.600" />
  </svg>
);
const BatteryTray = () => (
  <svg width="24" height="20" viewBox="0 0 24 20" fill="none" stroke="#fff" strokeWidth="1.600">
    <rect x="1" y="3" width="19" height="14" rx="3" />
    <path d="M4 6h6v8H4z" fill="#fff" stroke="none" />
    <path d="M22.500 8v4" />
  </svg>
);

/* ----- data ----- */
const menuItems = [
  { label: 'File', left: 22, w: 38 },
  { label: 'Home', left: 41, w: 48, active: true },
  { label: 'Insert', left: 39, w: 48 },
  { label: 'Modeling', left: 34, w: 74 },
  { label: 'View', left: 39, w: 38 },
  { label: 'Optimize', left: 39, w: 72 },
  { label: 'Help', left: 38, w: 38 },
  { label: 'Format', left: 17, w: 94, context: true },
  { label: 'Data / Drill', left: 5, w: 124, context: true },
];

const kpis = [
  { title: 'REVENUE', value: '115.04M', x: 64, y: 285, w: 179, h: 67, ts: 20, tt: 0, vs: 34, vt: 8, vc: MAGENTA, tc: '#ee9aa0' },
  { title: 'REVPAR', value: '6.50K', x: 265, y: 285, w: 108, h: 67, ts: 21, tt: 1.5, tl: 5, vs: 28, vt: 8.5, vl: 16 },
  { title: 'DSRN', value: '2.53K', x: 414, y: 285, w: 111, h: 63, ts: 21, tt: 1.5, tl: 5, vs: 27, vt: 5, vl: 20 },
  { title: 'OCCUPANCY %', value: '0.51', x: 68, y: 457, w: 130, h: 69, ts: 17.5, tt: 0, tl: 4, vs: 30, vt: 9.5, vl: 35, line: '#666' },
  { title: 'ADR', value: '12.75K', x: 224, y: 457, w: 114, h: 69, ts: 21, tt: 2.5, vs: 27, vt: 7, line: '#666' },
  { title: 'REALIZATION %', value: '70.36%', x: 374, y: 457, w: 127, h: 69, ts: 16.5, tt: 1.75, tl: 5, vs: 26, vt: 10.75, vl: 20 },
];

const wows = [
  { key: 'rev', lines: ['REVENUE', 'WoW%'], center: true, x: 68, y: 360, w: 130, h: 80, tl: 0, tri: 11, rl: 6, rw: 103, al: 11, ar: 102, vs: 12.5, value: '0.20%', arrow: 'up', as: 16 },
  { key: 'rvp', lines: ['REVPAR WoW%'], x: 255, y: 360, w: 135, h: 80, tl: 13, tri: 12, rl: 6, rw: 114, al: 13, ar: 115, vs: 12.5, value: '0.20%', arrow: 'up', as: 16 },
  { key: 'dsr', lines: ['DSRN', 'WoW%'], x: 414, y: 360, w: 111, h: 80, tl: 12, rl: 6, rw: 83, al: 13, ar: 85, vs: 16, value: '0.00', arrow: 'right', thumb: { l: 91, t: 6, w: 9, h: 27 } },
  { key: 'occ', lines: ['occupancy WoW%'], x: 64, y: 535, w: 154, h: 68, tl: 12, tri: 12, down: true, rl: 6, rw: 123, al: 13, ar: 124, vs: 16, value: '0.01%', arrow: 'up', as: 20, thumb: { l: 135, t: 6, w: 9, h: 49 } },
  { key: 'adr', lines: ['ADR WoW%'], x: 234, y: 535, w: 124, h: 69, tl: 13, rl: 6, rw: 86, al: 14, ar: 87, vs: 12.5, value: '0.19%', arrow: 'up', as: 16 },
  { key: 'rea', lines: ['Realization', 'WoW%'], x: 374, y: 526, w: 129, h: 90, tl: 12, tri: 13, rl: 6, rw: 103, al: 14, ar: 109, rh: 22, vl: 46, vs: 12.5, value: '-0.03%', arrow: 'down', thumb: { l: 110, t: 7, w: 9, h: 58 }, hthumb: { l: 7, t: 71, w: 87, h: 10 } },
];

const smallColumns = [74, 69, 92, 77, 89];
const smallRows = [
  ['WEEKDAY', '6,262.35', '0.49', '12,717.88', '0.70'],
  ['WEEKEND', '7,097.75', '0.55', '12,830.26', '0.72'],
];

const columns = [81, 103, 78, 64, 54, 92, 55, 49, 49, 50, 89, 101, 70];
const headers = ['property_id', 'property_name', 'city', 'Revenue', 'Revpar', 'occupancy %', 'ADR', 'DSRN', 'DBRN', 'DURN', 'Realization%', 'Cancellation %', 'Average Rating'];
const rows: [string, string, string, string, number, string, string, string, string, string, string, string, string, number][] = [
  ['16559', 'Atliq Exotica', 'Mumbai', '8M', 50, '9,506', '58.44%', '16,266', '121', '71', '51', '71.92%', '23.64%', 65],
  ['17563', 'Atliq Palace', 'Mumbai', '7M', 41, '9,202', '58.65%', '15,688', '104', '61', '42', '68.62%', '25.29%', 65],
  ['17559', 'Atliq Exotica', 'Mumbai', '6M', 38, '8,720', '57.14%', '15,260', '101', '58', '40', '68.56%', '24.75%', 65],
  ['16563', 'Atliq Palace', 'Delhi', '6M', 37, '7,440', '59.58%', '12,487', '117', '70', '51', '72.54%', '24.39%', 65],
  ['17560', 'Atliq City', 'Mumbai', '6M', 37, '6,983', '47.04%', '14,846', '123', '58', '40', '68.40%', '24.94%', 65],
  ['19562', 'Atliq Bay', 'Bangalore', '6M', 34, '8,208', '58.18%', '14,107', '96', '56', '39', '69.57%', '24.55%', 65],
  ['19560', 'Atliq City', 'Bangalore', '5M', 32, '7,688', '56.71%', '13,557', '99', '56', '39', '68.96%', '27.74%', 65],
  ['17558', 'Atliq Grands', 'Mumbai', '5M', 30, '6,975', '47.48%', '14,690', '102', '48', '33', '69.03%', '26.84%', 65],
  ['17561', 'Atliq Blu', 'Mumbai', '5M', 30, '8,367', '58.99%', '14,183', '85', '50', '35', '69.80%', '22.79%', 65],
  ['17564', 'Atliq Seasons', 'Mumbai', '5M', 29, '6,957', '40.35%', '17,239', '97', '39', '29', '72.99%', '21.17%', 51],
];

const tabs = [
  { label: 'Realization WoW%', w: 175 },
  { label: 'DSRN WoW%', w: 142 },
  { label: 'DASHBOARD 1', w: 152, active: true },
  { label: 'Page 2', w: 95 },
  { label: 'Page 3', w: 96 },
  { label: 'Page 4', w: 95 },
  { label: 'Page 5', w: 95 },
  { label: 'Page 6', w: 96 },
  { label: 'Page 7', w: 95 },
  { label: 'Page 8', w: 95 },
  { label: 'Page 9', w: 96 },
  { label: 'DASHBOARD 2', w: 151 },
  { label: 'Page 1', w: 95 },
];

const weeks = [19, 20, 21, 22, 23, 24, 25, 26, 27, 28, 29, 30, 31];

const handles = [
  [-3, -3, 11, 5], [-3, -3, 5, 11], [769, -3, 11, 5], [775, -3, 5, 11],
  [-3, 90, 11, 5], [-3, 84, 5, 11], [769, 90, 11, 5], [775, 84, 5, 11],
  [381, -3, 15, 5], [381, 90, 15, 5], [-3, 40, 5, 15], [775, 40, 5, 15],
];

const platformBars = [
  { x: 145, top: 827 },
  { x: 185, top: 829 },
  { x: 226, top: 829 },
  { x: 266, top: 829 },
  { x: 307, top: 830 },
  { x: 347, top: 831 },
  { x: 388, top: 832 },
];
const platformLine = '161,815 202,870 242,859 283,865 323,880 364,877 405,850';
const platformLabels = ['jour...', 'logt...', 'dire...', 'mak...', 'dire...', 'oth...', 'trip...'];

const polar = (cx: number, cy: number, r: number, a: number) => [cx + r * Math.sin(a), cy - r * Math.cos(a)];
const donutSlice = (cx: number, cy: number, R: number, r: number, from: number, to: number) => {
  const big = to - from > Math.PI ? 1 : 0;
  const [x1, y1] = polar(cx, cy, R, from);
  const [x2, y2] = polar(cx, cy, R, to);
  const [x3, y3] = polar(cx, cy, r, to);
  const [x4, y4] = polar(cx, cy, r, from);
  return `M${x1} ${y1}A${R} ${R} 0 ${big} 1 ${x2} ${y2}L${x3} ${y3}A${r} ${r} 0 ${big} 0 ${x4} ${y4}Z`;
};

const ChartLayer = ({ x, y, w, h, children }: { x: number; y: number; w: number; h: number; children: React.ReactNode }) => (
  <ChartCanvas width={w} height={h} viewBox={`${x} ${y} ${w} ${h}`}>
    {children}
  </ChartCanvas>
);

const Grid = ({ ys, from, to }: { ys: number[]; from: number; to: number }) => (
  <>
    {ys.map((y) => (
      <line key={y} x1={from} x2={to} y1={y} y2={y} stroke="#c8c6c4" strokeWidth="1.5" strokeDasharray="1.5 5" />
    ))}
  </>
);

const ColSet = ({ widths }: { widths: number[] }) => (
  <colgroup>
    {widths.map((w, i) => (
      <Col key={i} $w={w} />
    ))}
  </colgroup>
);

const Slicer = ({ title, x, w, size, left, top, chevR, boxL, boxW, boxT }: { title: string; x: number; w: number; size: number; left: number; top: number; chevR: number; boxL: number; boxW: number; boxT: number }) => (
  <Framed $x={x} $y={189} $w={w} $h={78} $line="#333">
    <SlicerTitle $size={size} $left={left} $top={top}>
      {title}
    </SlicerTitle>
    <SlicerChevron $right={chevR}>
      <ChevronDown size={16} strokeWidth={1.2} color="#333" />
    </SlicerChevron>
    <DropBox $left={boxL} $w={boxW} $top={boxT}>
      All
      <ChevronDown size={16} strokeWidth={1.2} color="#605e5c" />
    </DropBox>
  </Framed>
);

const taskIcons: { key: string; node: React.ReactNode; bg?: string; dot?: [string, number]; badge?: React.ReactNode }[] = [
  { key: 'start', node: <WindowsLogo /> },
  { key: 'search', node: <TaskSearch /> },
  { key: 'view', node: <TaskView /> },
  { key: 'copilot', node: <CopilotIcon size={30} /> },
  { key: 'folder', node: <FolderIcon />, dot: ['#8a8a8a', 7] },
  { key: 'edge', node: <EdgeIcon /> },
  { key: 'store', node: <StoreIcon /> },
  { key: 'diamond', node: <DiamondIcon /> },
  { key: 'help', node: <HelpIcon />, badge: <TileBadge $c="#f6c012" $r={6} $t={2} $size={18} /> },
  { key: 'mcafee', node: <McAfeeIcon /> },
  { key: 'chrome', node: <ChromeIcon /> },
  { key: 'wa', node: <WhatsAppIcon />, dot: ['#8a8a8a', 7], badge: <TileBadge $c="#35b4ef" $color="#1f2625" $r={1} $t={-3} $size={24}>55</TileBadge> },
  { key: 'ring', node: <RingIcon /> },
  { key: 'dict', node: <DictIcon /> },
  { key: 'calc', node: <TaskCalc /> },
  { key: 'brave', node: <BraveIcon /> },
  { key: 'excel', node: <ExcelIcon /> },
  { key: 'pin', node: <PinIcon /> },
  { key: 'pbi', node: <PowerBiIcon />, bg: '#2c3432', dot: ['#4cc2f1', 20] },
  { key: 'teams', node: <TeamsIcon />, bg: '#7a3f49', dot: ['#f58aa0', 7] },
];

export default function App() {
  return (
    <Shell>
      <GlobalStyle />
      <TitleBar>
        <TitleButton $w={22}><SaveIcon /></TitleButton>
        <TitleButton $w={50}><UndoIcon /></TitleButton>
        <TitleButton $w={26}><RedoIcon /></TitleButton>
        <DocName>PROJECT 2 • Last saved: Today at 12:28 AM</DocName>
        <Caret />
        <SearchBox>
          <MirroredSearch size={22} strokeWidth={1.4} color="#333" />
          Search
        </SearchBox>
        <TitleRight>
          <SignIn>Sign in</SignIn>
          <Avatar><PersonIcon /></Avatar>
          <WinButton><Minus size={16} /></WinButton>
          <WinButton><Square size={13} strokeWidth={1.5} /></WinButton>
          <WinButton><X size={18} strokeWidth={1.4} /></WinButton>
        </TitleRight>
      </TitleBar>

      <MenuBar>
        {menuItems.map((m) => (
          <MenuItem key={m.label} $left={m.left} $w={m.w} $active={m.active} $context={m.context}>
            {m.label}
          </MenuItem>
        ))}
        <ShareButton>
          <ShareIcon />
          Share
          <ChevronDown size={16} />
        </ShareButton>
      </MenuBar>

      <Ribbon>
        <RibbonGroup $w={109} $gap={16} $shift={-7}>
          <ClipboardIcon />
          <RibbonCaret size={16} $pull={14} />
          <PainterIcon />
        </RibbonGroup>
        <RibbonGroup $w={132} $gap={15} $shift={10}>
          <GetDataIcon />
          <RibbonCaret size={16} $pull={14} />
          <RecentIcon />
          <RibbonCaret size={16} $pull={14} />
        </RibbonGroup>
        <RibbonGroup $w={120} $gap={18}>
          <TransformIcon />
          <RibbonCaret size={16} $pull={17} />
          <RefreshIcon />
        </RibbonGroup>
        <RibbonGroup $w={61} $shift={4}><NewVisualIcon /></RibbonGroup>
        <RibbonGroup $w={60}><CalcIcon /></RibbonGroup>
        <RibbonGroup $w={164} $muted $shift={10}>
          <SensitivityIcon />
          Sensitivity
          <RibbonCaret size={15} $pull={4} />
        </RibbonGroup>
        <RibbonGroup $w={131} $gap={11}>
          <PublishIcon />
          Publish
        </RibbonGroup>
        <RibbonGroup $w={133} $gap={11}>
          <CopilotIcon />
          Copilot
        </RibbonGroup>
        <RibbonGroup $w={59}><MoreHorizontal size={24} /></RibbonGroup>
        <RibbonFold><ChevronDown size={16} strokeWidth={2.5} /></RibbonFold>
      </Ribbon>

      <Body>
        <NavRail>
          <NavMarker />
          <NavIcon><ReportNavIcon /></NavIcon>
          <NavIcon><TableNavIcon /></NavIcon>
          <NavIcon><ModelNavIcon /></NavIcon>
          <NavIcon><DaxNavIcon /></NavIcon>
        </NavRail>

        <Center>
          <CanvasRow>
            <CanvasArea>
              <ReportPage>
                <HeaderTools>
                  <Funnel size={20} strokeWidth={1.2} />
                  <FocusIcon />
                  <MoreHorizontal size={20} />
                </HeaderTools>

                <Slicer title="FILTER BY CITY" x={63} w={118} size={13} left={6} top={4} chevR={14} boxL={12} boxW={92} boxT={9} />
                <Slicer title="FILTER BY ROOM TYPE" x={199} w={140} size={11.2} left={6} top={3} chevR={12} boxL={12} boxW={113} boxT={6} />

                <Visual $x={343} $y={190} $w={241} $h={78} $shadow={false}>
                  <DateLabel>mmm yy</DateLabel>
                  <DateBox>July, 2022</DateBox>
                </Visual>

                <WeekFrame $x={586} $y={188} $w={781} $h={97} $shadow={false}>
                  <WeekTitle>week no</WeekTitle>
                  <WeekTools>
                    <EraserIcon />
                    <ChevronDown size={14} strokeWidth={1.2} />
                  </WeekTools>
                  <WeekRow>
                    {weeks.map((w) => (
                      <WeekButton key={w} $on={w === 31}>
                        <span>W</span>
                        <span>{w}</span>
                      </WeekButton>
                    ))}
                  </WeekRow>
                  {handles.map(([l, t, w, h]) => (
                    <Handle key={`${l}-${t}-${w}`} $l={l} $t={t} $w={w} $h={h} />
                  ))}
                </WeekFrame>

                {kpis.map((k) => (
                  <Framed key={k.title} $x={k.x} $y={k.y} $w={k.w} $h={k.h} $line={k.line}>
                    <KpiTitle $size={k.ts} $color={k.tc ?? SALMON} $top={k.tt} $left={k.tl}>
                      {k.title}
                    </KpiTitle>
                    <KpiValue $size={k.vs} $color={k.vc ?? PINK} $top={k.vt} $left={k.vl}>
                      {k.value}
                    </KpiValue>
                  </Framed>
                ))}

                {wows.map((c) => (
                  <Framed key={c.key} $x={c.x} $y={c.y} $w={c.w} $h={c.h} $z={c.key === 'rea' ? 2 : 1}>
                    <WowTitle $left={c.tl} $center={c.center}>
                      {c.lines.map((l) => (
                        <div key={l}>{l}</div>
                      ))}
                    </WowTitle>
                    <SortSlot $left={c.tri ?? 0}>
                      {c.tri !== undefined && <SortMark $down={c.down} />}
                    </SortSlot>
                    <WowRule $left={c.rl} $w={c.rw} />
                    <WowRow $left={c.al} $right={c.ar} $size={c.vs} $h={c.rh}>
                      {c.arrow === 'up' && <ArrowUpIcon size={c.as} />}
                      {c.arrow === 'right' && <ArrowRightIcon />}
                      {c.arrow === 'down' && <ArrowDownIcon />}
                      <WowValue $left={c.vl}>{c.value}</WowValue>
                    </WowRow>
                    {c.thumb && <InnerThumb $l={c.thumb.l} $t={c.thumb.t} $w={c.thumb.w} $h={c.thumb.h} />}
                    {c.hthumb && <InnerThumb $l={c.hthumb.l} $t={c.hthumb.t} $w={c.hthumb.w} $h={c.hthumb.h} />}
                  </Framed>
                ))}

                <Visual $x={71} $y={640} $w={401} $h={83} $shadow={false}>
                  <SmallTable>
                    <ColSet widths={smallColumns} />
                    <thead>
                      <tr>
                        <th>
                          type
                          <HeadSort $left={6} $bottom={1}><SortMark $light /></HeadSort>
                        </th>
                        <th>Revpar</th>
                        <th>occupancy %</th>
                        <th>ADR</th>
                        <th>Realization%</th>
                      </tr>
                    </thead>
                    <tbody>
                      {smallRows.map((r) => (
                        <tr key={r[0]}>
                          {r.map((v, i) => (
                            <td key={i}>{v}</td>
                          ))}
                        </tr>
                      ))}
                      <tr className="total">
                        <td>Total</td>
                        <td>6,501.04</td>
                        <td>0.51</td>
                        <td>12,752.72</td>
                        <td>0.70</td>
                      </tr>
                    </tbody>
                  </SmallTable>
                </Visual>

                <Visual $x={64} $y={730} $w={440} $h={200} $shadow={false}>
                  <VisualTitle $size={20} $font={DIN} $left={6} $top={2} $spacing={0.5}>
                    Realization% and ADR by booking_platform
                  </VisualTitle>
                  <Legend $left={7} $top={12} $gap={6}>
                    <LegendEntry><Dot $c={PINK} />Realization%</LegendEntry>
                    <LegendEntry><Dot $c={NAVY} />ADR</LegendEntry>
                  </Legend>
                  <ChartLayer x={64} y={730} w={440} h={200}>
                    <Grid ys={[807, 847, 888]} from={128} to={437} />
                    {platformBars.map((b) => (
                      <rect key={b.x} x={b.x} y={b.top} width={32} height={887 - b.top} fill={PINK} stroke="#f6d3e8" strokeWidth="1" />
                    ))}
                    <polyline points={platformLine} fill="none" stroke={NAVY} strokeWidth="3.6" strokeLinejoin="round" strokeLinecap="round" />
                    <ChartText x={118} y={813} textAnchor="end" $size={14.5}>1</ChartText>
                    <ChartText x={118} y={894} textAnchor="end" $size={14.5}>0</ChartText>
                    <ChartText x={449} y={813} $size={14.5}>13,500</ChartText>
                    <ChartText x={449} y={853} $size={14.5}>13,000</ChartText>
                    <ChartText x={449} y={894} $size={14.5}>12,500</ChartText>
                    <ChartText transform="translate(81 887) rotate(-90)" $size={13} $fill="#252423">Realization%</ChartText>
                    <ChartText transform="translate(513 860) rotate(-90)" $size={13} $fill="#252423">ADR</ChartText>
                    {platformLabels.map((l, i) => (
                      <ChartText key={i} transform={`translate(${128 + i * 40.5} 925) rotate(-45)`} $size={14}>
                        {l}
                      </ChartText>
                    ))}
                  </ChartLayer>
                </Visual>

                <Framed $x={537} $y={289} $w={346} $h={209} $line="#444">
                  <VisualTitle $size={13.5} $left={5} $top={0} $weight={500}>occupancy % by category</VisualTitle>
                  <ChartLayer x={539} y={291} w={342} h={205}>
                    <path d={donutSlice(671, 402, 65, 31, 0, 0.5046 * 2 * Math.PI)} fill={PINK} />
                    <path d={donutSlice(671, 402, 65, 31, 0.5046 * 2 * Math.PI, 2 * Math.PI)} fill={MAGENTA} />
                    <path d="M603 352h15l4 5M719 449l4 7h14" fill="none" stroke="#b3b0ad" strokeWidth="1" />
                    <ChartText x={600} y={347} textAnchor="end" $size={12.5}>0K</ChartText>
                    <ChartText x={600} y={364} textAnchor="end" $size={12.5}>(49.54%)</ChartText>
                    <ChartText x={743} y={452} $size={12.5}>0K</ChartText>
                    <ChartText x={743} y={469} $size={12.5}>(50.46%)</ChartText>
                    <circle cx={806} cy={389} r={6.5} fill={PINK} />
                    <circle cx={806} cy={417} r={6.5} fill={MAGENTA} />
                    <ChartText x={815} y={394} $size={13}>Business</ChartText>
                    <ChartText x={815} y={422} $size={13}>Luxury</ChartText>
                  </ChartLayer>
                </Framed>

                <Framed $x={908} $y={286} $w={561} $h={224}>
                  <VisualTitle $size={20} $font={DIN} $left={4} $top={0} $spacing={0.45}>
                    Revpar, ADR and occupancy % by Month and week no
                  </VisualTitle>
                  <Legend $left={6} $top={13} $gap={6}>
                    <LegendEntry><Dot $c="#118dff" />Revpar</LegendEntry>
                    <LegendEntry><Dot $c={NAVY} />ADR</LegendEntry>
                    <LegendEntry><Dot $c="#e66c37" />occupancy %</LegendEntry>
                  </Legend>
                  <ChartLayer x={910} y={288} w={557} h={220}>
                    <Grid ys={[362, 388, 413, 438, 463]} from={973} to={1407} />
                    <line x1={1400} x2={1412} y1={396} y2={396} stroke="#c8c6c4" strokeDasharray="1.5 5" />
                    {['14K', '12K', '10K', '8K', '6K'].map((t, i) => (
                      <ChartText key={t} x={963} y={[368, 393, 419, 444, 469][i]} textAnchor="end" $size={14}>{t}</ChartText>
                    ))}
                    <ChartText x={1419} y={401} $size={14}>0.6</ChartText>
                    <ChartText x={1419} y={468} $size={14}>0.4</ChartText>
                    <circle cx={1190} cy={378} r={5.5} fill={NAVY} />
                    <circle cx={1190} cy={426} r={5.5} fill="#e66c37" />
                    <circle cx={1190} cy={456} r={5.5} fill="#118dff" />
                    <ChartText x={1190} y={481} textAnchor="middle" $size={12.5}>July W 31</ChartText>
                    <ChartText x={1190} y={500} textAnchor="middle" $size={12} $weight={600} $fill="#252423">mmm yy Month week no</ChartText>
                    <ChartText transform="translate(927 460) rotate(-90)" $size={12} $fill="#252423">Revpar and ADR</ChartText>
                    <ChartText transform="translate(1458 454) rotate(-90)" $size={12} $fill="#252423">occupancy %</ChartText>
                  </ChartLayer>
                </Framed>

                <Visual $x={522} $y={518} $w={950} $h={330} $shadow={false} $z={2}>
                  <BigTable>
                    <ColSet widths={columns} />
                    <thead>
                      <tr>
                        {headers.map((h) => (
                          <th key={h}>
                            {h}
                            {h === 'Revenue' && (
                              <HeadSort $left={7} $bottom={5}><SortMark $down $light /></HeadSort>
                            )}
                          </th>
                        ))}
                      </tr>
                    </thead>
                  </BigTable>
                  <RowClip>
                    <BigTable>
                      <ColSet widths={columns} />
                      <tbody>
                        {rows.map((r) => (
                          <tr key={r[0] + r[1]}>
                            <td>{r[0]}</td>
                            <td className="text">{r[1]}</td>
                            <td className="text">{r[2]}</td>
                            <BarCell $inset={8}>
                              <DataBar $left={8} style={{ width: r[4] }} />
                              <BarLabel>{r[3]}</BarLabel>
                            </BarCell>
                            {r.slice(5, 13).map((v, i) => (
                              <td key={i}>{v}</td>
                            ))}
                            <BarCell $inset={5}>
                              <DataBar $left={5} style={{ width: r[13] }} />
                            </BarCell>
                          </tr>
                        ))}
                      </tbody>
                    </BigTable>
                  </RowClip>
                  <TotalRow>
                    <ColSet widths={columns} />
                    <tbody>
                      <tr>
                        <td>Total</td>
                        <td />
                        <td />
                        <td>115M</td>
                        <td>6,501</td>
                        <td>50.98%</td>
                        <td>12,753</td>
                        <td>2,528</td>
                        <td>1,289</td>
                        <td>907</td>
                        <td>70.36%</td>
                        <td>24.31%</td>
                        <td />
                      </tr>
                    </tbody>
                  </TotalRow>
                  <InnerThumb $l={1} $t={316} $w={897} $h={10} />
                  <InnerThumb $l={937} $t={2} $w={8} $h={118} />
                </Visual>
              </ReportPage>
              <ScrollThumbV />
              <ScrollThumbH />
            </CanvasArea>
            <SidePane $w={41} $bg="#fff">
              <ChevronsLeft size={24} strokeWidth={1.3} />
              <PaneFunnel size={17} strokeWidth={1.3} />
              <PaneLabel $size={18} $pull={-6}>Filters</PaneLabel>
            </SidePane>
          </CanvasRow>

          <TabStrip>
            <ViewTools>
              <ViewButton $w={61}><MonitorIcon /></ViewButton>
              <ViewButton $w={43}><PhoneIcon /></ViewButton>
              <ViewButton $w={28}><PagerArrow left /></ViewButton>
              <ViewButton $w={10}><PagerArrow muted /></ViewButton>
              <ViewMarker />
            </ViewTools>
            <Tab $w={95} $cut>AR WoW%</Tab>
            {tabs.map((t) => (
              <Tab key={t.label} $w={t.w} $active={t.active}>
                {t.label}
              </Tab>
            ))}
            <AddTab><Plus size={20} strokeWidth={3.5} /></AddTab>
          </TabStrip>
        </Center>

        <SidePane $w={44} $bg="#f3f2f1">
          <ChevronsLeft size={24} strokeWidth={1.3} />
          <PaneLabel $size={19.5}>Visualizations</PaneLabel>
        </SidePane>
        <SidePane $w={43} $bg="#f3f2f1">
          <ChevronsLeft size={24} strokeWidth={1.3} />
          <PaneLabel $size={19}>Data</PaneLabel>
        </SidePane>
      </Body>

      <StatusBar>
        Page 27 of 37
        <ZoomControl>
          <Minus size={8} strokeWidth={3} />
          <ZoomTrack><ZoomThumb /></ZoomTrack>
          <Plus size={14} strokeWidth={1.5} />
          <ZoomText>100%</ZoomText>
          <FitIcon />
        </ZoomControl>
      </StatusBar>

      <Taskbar>
        <TaskStart>
          <TaskTile>
            <AlertIcon />
            <TileBadge $c="#b3261e" $r={2} $t={0} $size={19}>1</TileBadge>
          </TaskTile>
        </TaskStart>
        <TaskIcons>
          {taskIcons.map((t) => (
            <TaskTile key={t.key} $bg={t.bg}>
              {t.node}
              {t.badge}
              {t.dot && <TileDot $c={t.dot[0]} $w={t.dot[1]} />}
            </TaskTile>
          ))}
        </TaskIcons>
        <Tray>
          <TrayIcon $w={38}><ChevronUp size={20} strokeWidth={2} /></TrayIcon>
          <TrayIcon $w={40}><OneDriveTray /></TrayIcon>
          <TrayText $w={58}>ENG<br />IN</TrayText>
          <TrayIcon $w={34}><Wifi size={20} /></TrayIcon>
          <TrayIcon $w={28}><Volume2 size={20} /></TrayIcon>
          <TrayIcon $w={30}><BatteryTray /></TrayIcon>
          <TrayText $w={93} $right>19:45<br />10-04-2025</TrayText>
        </Tray>
      </Taskbar>
    </Shell>
  );
}
